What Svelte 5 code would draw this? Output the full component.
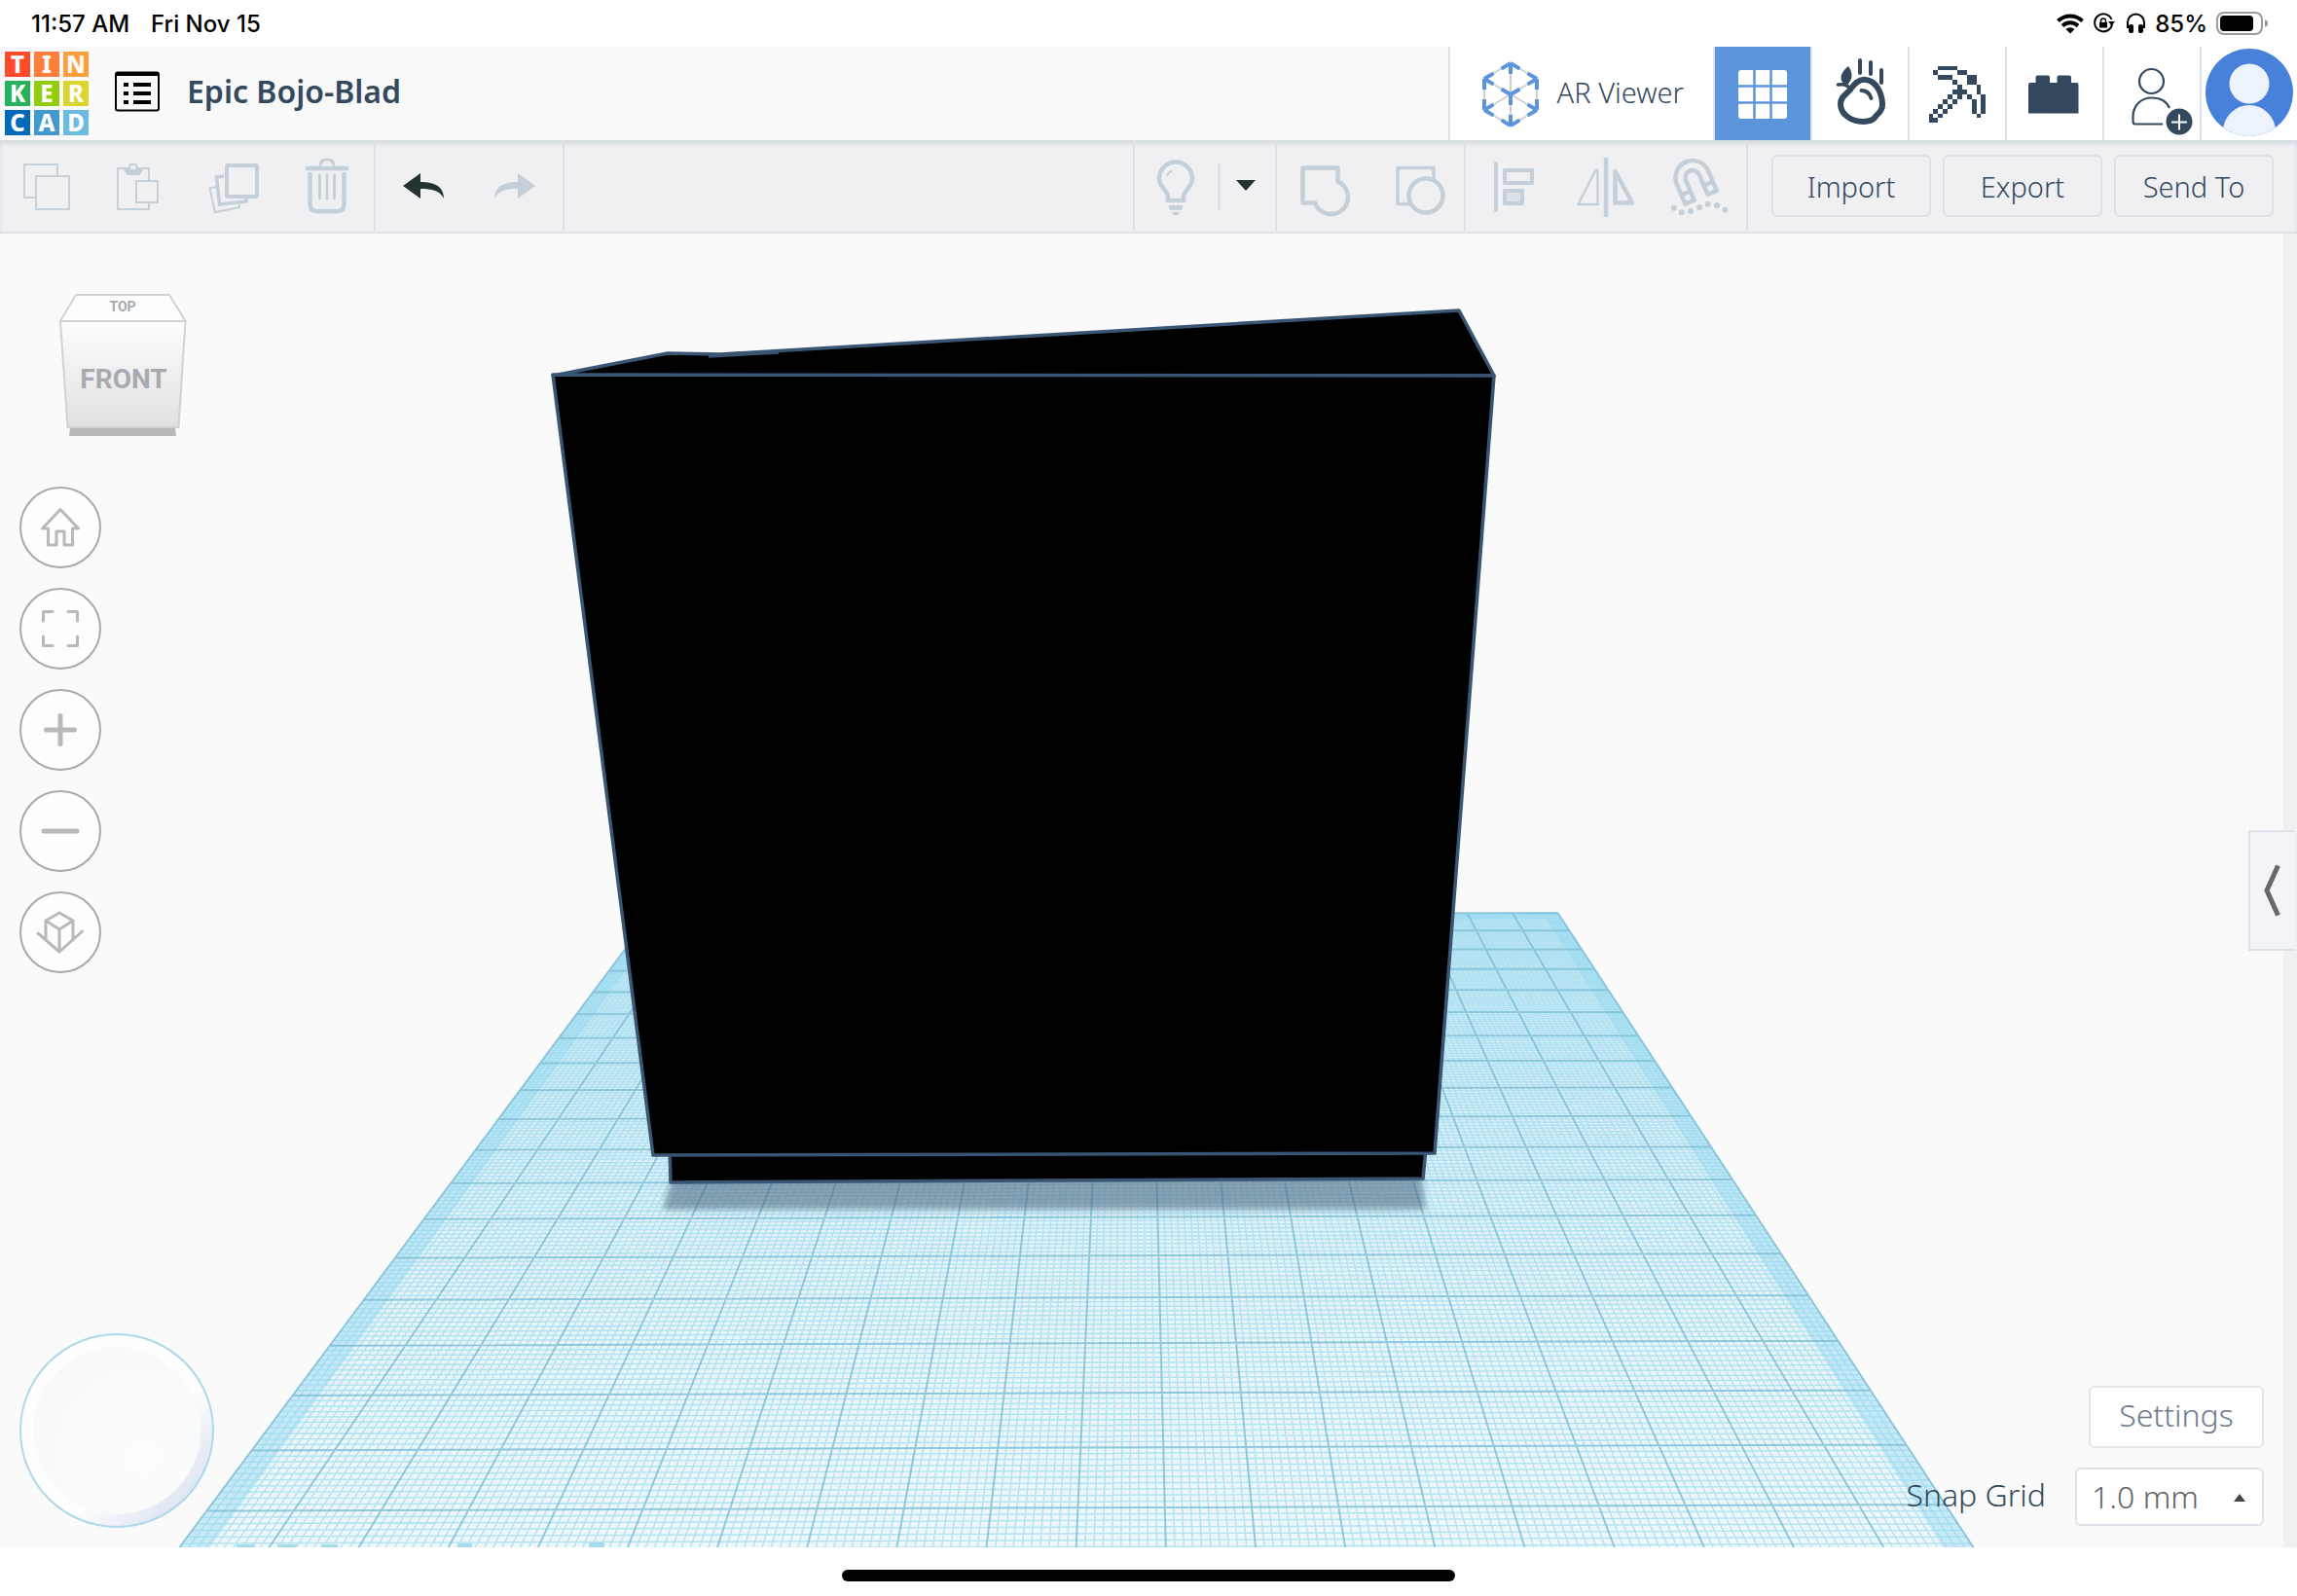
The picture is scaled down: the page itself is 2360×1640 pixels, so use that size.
<script>
  const logo = [
    ['T', 'red'], ['I', 'coral'], ['N', 'orange'],
    ['K', 'green'], ['E', 'lime'], ['R', 'yellow'],
    ['C', 'navy'], ['A', 'blue'], ['D', 'sky'],
  ];

  // Pixel rows of the pickaxe
  const pickaxe = [
    '..####......',
    '.#....##....',
    '..###...##..',
    '.....#..##..',
    '......#...#.',
    '.....###..#.',
    '....#.#.#..#',
    '...#.#...#.#',
    '..#.#....#.#',
    '.#.#.....#.#',
    '#.#.......#.',
    '##..........',
  ];
  const pixels = pickaxe.flatMap((row, y) =>
    [...row].flatMap((c, x) => (c === '#' ? [{ x, y }] : []))
  );

  // Workplane corners on the canvas: far left, far right, near right, near left
  const corners = [[668.5, 940], [1600.5, 938], [2093, 1690], [104, 1698]];

  function projection([p0, p1, p2, p3]) {
    const dx1 = p1[0] - p2[0], dx2 = p3[0] - p2[0];
    const dx3 = p0[0] - p1[0] + p2[0] - p3[0];
    const dy1 = p1[1] - p2[1], dy2 = p3[1] - p2[1];
    const dy3 = p0[1] - p1[1] + p2[1] - p3[1];
    const det = dx1 * dy2 - dx2 * dy1;
    const g = (dx3 * dy2 - dx2 * dy3) / det;
    const h = (dx1 * dy3 - dx3 * dy1) / det;
    const a = p1[0] - p0[0] + g * p1[0], b = p3[0] - p0[0] + h * p3[0];
    const d = p1[1] - p0[1] + g * p1[1], e = p3[1] - p0[1] + h * p3[1];
    return (u, v) => {
      const w = g * u + h * v + 1;
      return `${((a * u + b * v + p0[0]) / w).toFixed(2)} ${((d * u + e * v + p0[1]) / w).toFixed(2)}`;
    };
  }
  const at = projection(corners);
  const cells = 20;

  function lines(step, keep) {
    let d = '';
    for (let i = 0; i <= cells * 10; i += step) {
      if (!keep(i)) continue;
      const t = i / (cells * 10);
      d += `M${at(t, 0)}L${at(t, 1)}M${at(0, t)}L${at(1, t)}`;
    }
    return d;
  }
  const fine = lines(1, (i) => i % 10 !== 0);
  const bold = lines(10, () => true);
  const m = 0.017;
  const plane = `M${at(0, 0)}L${at(1, 0)}L${at(1, 1)}L${at(0, 1)}Z`;
  const rim = `${plane}M${at(m, m)}L${at(1 - m, m)}L${at(1 - m, 1 - m)}L${at(m, 1 - m)}Z`;

  const hex = [[0, -32], [27, -16], [27, 16], [0, 32], [-27, 16], [-27, -16]];
  const stubs = hex
    .map(([x, y], i) => {
      const ends = [hex[(i + 1) % 6], hex[(i + 5) % 6], [0, 0]];
      return ends
        .map(([ex, ey]) => {
          const len = Math.hypot(ex - x, ey - y);
          return `M${x} ${y}L${x + ((ex - x) * 11) / len} ${y + ((ey - y) * 11) / len}`;
        })
        .join('');
    })
    .join('');

  let snap = $state('1.0 mm');
</script>

<div class="screen">
  <div class="status">
    <span>11:57 AM</span>
    <span class="date">Fri Nov 15</span>
    <div class="indicators">
      <svg width="28" height="22" viewBox="2114 13 28 22" aria-label="Wi-Fi">
        <g fill="none" stroke="#000" stroke-width="4">
          <path d="M2115.5 21.500a18 18 0 0 1 25 0M2120 26.500a11.500 11.500 0 0 1 16 0" />
        </g>
        <path d="M2123.500 30a6.500 6.500 0 0 1 9 0l-4.500 4.500z" />
      </svg>
      <svg width="24" height="22" viewBox="2151 13 24 22" aria-label="Rotation lock">
        <path d="M2170.500 20a9 9 0 1 0 .5 5" fill="none" stroke="#000" stroke-width="2" />
        <path d="M2167 22h7l-3.500 4.500zM2158 23h8v5.500h-8z" />
        <path d="M2159.500 23v-1.500a2.500 2.500 0 0 1 5 0V23" fill="none" stroke="#000" stroke-width="1.500" />
      </svg>
      <svg width="22" height="22" viewBox="2182 13 22 22" aria-label="Headphones">
        <path d="M2185 29v-6a8.500 8.500 0 0 1 17 0v6" fill="none" stroke="#000" stroke-width="2" />
        <rect x="2186" y="25" width="5" height="9" rx="2" />
        <rect x="2196" y="25" width="5" height="9" rx="2" />
      </svg>
      <span>85%</span>
      <svg width="54" height="26" viewBox="2277 11 54 26" aria-label="Battery">
        <rect x="2278" y="13" width="46" height="22" rx="7" fill="none" stroke="#9a9a9a" stroke-width="2" />
        <rect x="2281" y="16" width="34" height="16" rx="4" />
        <path d="M2327 20q3 1 3 4t-3 4z" fill="#9a9a9a" />
      </svg>
    </div>
  </div>

  <header>
    <a class="logo" href="#home" aria-label="Tinkercad">
      {#each logo as [letter, tone]}
        <span class={tone}>{letter}</span>
      {/each}
    </a>
    <button class="list" aria-label="Designs">
      <svg width="46" height="42" viewBox="118 72 46 42">
        <rect x="119" y="73.500" width="44" height="39" rx="2" fill="none" stroke="#000" stroke-width="2" />
        <path d="M119 73h44v4h-44zM127 84h5v4h-5zM127 93h5v4h-5zM127 102h5v4h-5zM137 84h18v4h-18zM137 93h18v4h-18zM137 102h18v4h-18z" />
      </svg>
    </button>
    <h1>Epic Bojo-Blad</h1>
    <nav class="modes">
      <button class="ar">
        <svg width="60" height="70" viewBox="-30 -35 60 70">
          <path d="M0-32L27-16V16L0 32L-27 16V-16ZM0-32V32M-27-16L27 16M27-16L-27 16" fill="none" stroke="#cfcfcf" stroke-width="2" />
          <path d="{stubs}M0 0V11M0 0L-9.500-5.500M0 0L9.500-5.500" fill="none" stroke="#5c95dc" stroke-width="4" />
        </svg>
        <span>AR Viewer</span>
      </button>
      <button class="active" aria-label="3D design">
        <svg width="98" height="96" viewBox="1762 48 98 96">
          <rect x="1786" y="72" width="50" height="50" rx="3" fill="#fff" />
          <path d="M1802.500 72V122M1819.500 72V122M1786 88.500H1836M1786 105.500H1836" stroke="#5c95dc" stroke-width="2.500" />
        </svg>
      </button>
      <button aria-label="Sim lab">
        <svg width="98" height="96" viewBox="1862 48 98 96">
          <g fill="none" stroke="#34495e" stroke-width="6">
            <path d="M1901 92C1906 85 1911 81 1917 82C1927 83 1933 94 1934 106C1934.500 112 1932 115 1929 117.500C1926 120 1926 125 1914 125C1903 125 1891 118 1891 107C1891 99 1897 97 1901 92Z" />
            <path d="M1911 62V75M1922 64V76M1933 72V85" stroke-width="4" stroke-linecap="round" />
            <path d="M1912.500 93C1918 93 1921 96 1922.500 101" stroke-width="4" stroke-linecap="round" />
            <path d="M1888.500 87C1894 86 1899 87 1902 93" stroke-width="3.500" stroke-linecap="round" />
          </g>
          <path d="M1899 68C1904 75 1904 82 1897 88C1888 83 1891 74 1899 68Z" fill="#34495e" />
        </svg>
      </button>
      <button aria-label="Blocks">
        <svg width="98" height="96" viewBox="1962 48 98 96" fill="#34495e" shape-rendering="crispEdges">
          {#each pixels as p}
            <rect x={1981.5 + p.x * 4.9} y={67.500 + p.y * 4.9} width="4.9" height="4.9" />
          {/each}
        </svg>
      </button>
      <button aria-label="Bricks">
        <svg width="98" height="96" viewBox="2062 48 98 96">
          <path d="M2084 116.500V87q0-2 2-2h5.500v-5.500q0-2 2-2h10.500q2 0 2 2V85h7.500v-5.500q0-2 2-2h10.500q2 0 2 2V85h5.500q2 0 2 2v29.500z" fill="#34495e" />
        </svg>
      </button>
      <button aria-label="Invite people">
        <svg width="98" height="96" viewBox="2162 48 98 96">
          <g fill="none" stroke="#34495e" stroke-width="2.200">
            <circle cx="2210.500" cy="83.500" r="12.500" />
            <path d="M2222 127.500H2194q-2.500 0-2.500-2.500V120C2191.500 108 2200 100.500 2210.500 100.500C2219 100.500 2226 104 2229 111" />
          </g>
          <circle cx="2239" cy="125" r="13.500" fill="#34495e" />
          <path d="M2231 125.500h16M2239 117.500v16" stroke="#fff" stroke-width="2" />
        </svg>
      </button>
      <button aria-label="Account">
        <svg width="98" height="96" viewBox="2262 48 98 96">
          <clipPath id="face"><circle cx="2311" cy="95" r="45" /></clipPath>
          <circle cx="2311" cy="95" r="45" fill="#4881d9" />
          <g fill="#edf3fb" clip-path="url(#face)">
            <circle cx="2311" cy="86" r="20.500" />
            <circle cx="2311" cy="135" r="27" />
          </g>
        </svg>
      </button>
    </nav>
  </header>

  <div class="toolbar">
    <div class="group">
      <button aria-label="Copy">
        <svg class="icon" viewBox="0 144 96 94">
          <path d="M36 203H25V169H59V180" /><rect x="37" y="181" width="34" height="34" />
        </svg>
      </button>
      <button aria-label="Paste">
        <svg class="icon" viewBox="96 144 96 94">
          <path d="M153 185V173H121V215H153V209" /><rect x="140" y="186" width="22" height="22" />
          <path d="M127 173h20v2l-4 5h-12l-4-5z" fill="#c5cfd9" stroke="none" />
          <rect x="133" y="169" width="7.500" height="6" rx="2" fill="#f0f0f3" />
        </svg>
      </button>
      <button aria-label="Duplicate">
        <svg class="icon" viewBox="192 144 96 94">
          <rect x="233" y="170" width="31" height="32" stroke-width="4" rx="1" />
          <path d="M230 181L222.500 182L225.500 210L253 207V204" stroke-width="3.500" />
          <path d="M222 192L215.500 193.500L221 218L246 213V210" />
        </svg>
      </button>
      <button aria-label="Delete">
        <svg class="icon" viewBox="288 144 96 94">
          <path d="M316 173H356M318.500 179V210q0 7 7 7H346.500q7 0 7-7V179" stroke-width="4.500" stroke-linecap="round" />
          <path d="M329 171q0-7 7-7t7 7M328.500 180V204M336 180V204M343.500 180V204" stroke-width="2.800" stroke-linecap="round" />
        </svg>
      </button>
    </div>
    <div class="group">
      <button aria-label="Undo">
        <svg class="icon solid" viewBox="386 144 96 94">
          <path d="M414 191L432 178V187C447 187 456 192 456 204C452 196 444 194 432 194V204Z" fill="#253233" />
        </svg>
      </button>
      <button aria-label="Redo">
        <svg class="icon solid" viewBox="482 144 96 94">
          <path d="M550 191L532 178V187C517 187 508 192 508 204C512 196 520 194 532 194V204Z" fill="#c5cfd9" />
        </svg>
      </button>
    </div>
    <div class="group fill">
      <button aria-label="Show all">
        <svg class="icon" viewBox="1166 144 96 94">
          <path d="M1200 206V201C1198 194 1191 192 1191 183.500A17 17 0 0 1 1225 183.500C1225 192 1218 194 1216 201V206Z" stroke-width="4.500" />
          <path d="M1199 181q1-4 5-5" />
          <path d="M1201 211h14v2q0 3-3 3h-8q-3 0-3-3zM1203.500 218h9q-1 3-3 3h-3q-2 0-3-3z" fill="#c5cfd9" stroke="none" />
          <path d="M1252.500 169V215" stroke="#dde2e8" stroke-width="3" stroke-linecap="round" />
        </svg>
      </button>
      <button class="narrow" aria-label="Visibility options">
        <svg class="icon solid" viewBox="1262 144 48 94"><path d="M1270 185h20l-10 11z" fill="#253233" /></svg>
      </button>
    </div>
    <div class="group">
      <button aria-label="Group">
        <svg class="icon thick" viewBox="1312 144 96 94">
          <path d="M1338.500 172.500H1374.500V186.500A17.500 17.500 0 1 1 1351 208.500H1338.500Z" />
        </svg>
      </button>
      <button aria-label="Ungroup">
        <svg class="icon thick" viewBox="1408 144 96 94">
          <path d="M1473 184V172.500H1436V209.500H1449" stroke-width="3.500" />
          <circle cx="1465" cy="201" r="17.500" />
        </svg>
      </button>
    </div>
    <div class="group">
      <button aria-label="Align">
        <svg class="icon thick" viewBox="1506 144 96 94">
          <path d="M1537 168V216" stroke-width="4" />
          <rect x="1546" y="175" width="28" height="13" stroke-width="4" />
          <rect x="1546" y="196" width="18" height="13" stroke-width="4" fill="#dde2e8" />
        </svg>
      </button>
      <button aria-label="Mirror">
        <svg class="icon thick" viewBox="1602 144 96 94">
          <path d="M1650 164V221" />
          <path d="M1621.500 210L1639 175.500q2-2 2.500 0V210Z" stroke-width="2.500" />
          <path d="M1659.500 176L1677 208.500H1659.500Z" />
        </svg>
      </button>
      <button aria-label="Snap">
        <svg class="icon thick" viewBox="1698 144 96 94">
          <path transform="translate(1739 182.500) rotate(-23)" d="M-17.500 22V0A17.500 17.500 0 0 1 17.500 0V22H7.500V0A7.500 7.500 0 0 0-7.500 0V22ZM-17.500 12H-7.500M7.500 12H17.500" />
          <g fill="#c5cfd9" stroke="none">
            {#each [[1719.7, 213.7], [1727.7, 218.3], [1737, 217], [1746, 213], [1754.7, 209.7], [1764, 211], [1772.3, 215.7]] as [x, y]}
              <circle cx={x} cy={y} r="3" />
            {/each}
          </g>
        </svg>
      </button>
    </div>
    <div class="group actions">
      <button>Import</button>
      <button>Export</button>
      <button>Send To</button>
    </div>
  </div>

  <main>
    <svg class="canvas" viewBox="0 240 2360 1350" preserveAspectRatio="xMidYMin slice" aria-label="Workplane">
      <defs>
        <filter id="soft" x="-5%" y="-20%" width="110%" height="140%"><feGaussianBlur stdDeviation="3" /></filter>
        <linearGradient id="haze" gradientUnits="userSpaceOnUse" x1="0" y1="940" x2="0" y2="1590">
          <stop offset="0" stop-color="#cdebf6" /><stop offset="0.500" stop-color="#e4f3f8" /><stop offset="1" stop-color="#eef7f9" />
        </linearGradient>
      </defs>
      <path d={plane} fill="url(#haze)" />
      <path d={fine} fill="none" stroke="#a3dcef" stroke-width="1.500" opacity="0.750" />
      <path d={rim} fill="#8fd8f0" fill-rule="evenodd" opacity="0.400" />
      <path d={bold} fill="none" stroke="#7abdd5" stroke-width="2" opacity="0.800" />
      <path d="M243 1587h19v3h-19zM285 1587h20v3h-20zM330 1587h17v3h-17zM470 1586h15v4h-15zM605 1585h16v5h-16z" fill="#a8dbea" />
      <path d="M692 1205H1460L1465 1243H681Z" fill="#46627a" opacity="0.550" filter="url(#soft)" />
      <g stroke="#3a5573" stroke-width="3.500" stroke-linejoin="round">
        <path d="M688 1180L689 1215L1462 1211L1465 1180Z" />
        <path d="M568 386L686 363L740 364L1499 319L1535 386Z" />
        <path d="M568 385L1535 386L1474 1185L671 1187Z" />
        <path d="M728 366L800 362" />
      </g>
    </svg>

    <div class="left">
      <svg class="cube" width="140" height="160" viewBox="56 296 140 160" aria-label="View cube">
        <defs>
          <linearGradient id="shade" x1="0" y1="0" x2="0" y2="1">
            <stop offset="0" stop-color="#fdfdfd" /><stop offset="1" stop-color="#e0e0e0" />
          </linearGradient>
        </defs>
        <path d="M72 439H180L181 448H71Z" fill="#bababa" />
        <g stroke="#d2d2d2" stroke-width="2">
          <path d="M78 303H174L190.500 330H62Z" fill="#fdfdfd" />
          <path d="M62 330H190.500L183.500 439H69.500Z" fill="url(#shade)" />
        </g>
        <text class="top" x="126" y="320">TOP</text>
        <text class="front" x="127" y="399">FRONT</text>
      </svg>
      <div class="views">
        <button aria-label="Home view"><svg viewBox="-42 -42 84 84"><path d="M0-18.500L18.500 1H12.500V18H4V4H-4V18H-12.500V1H-18.500Z" /></svg></button>
        <button aria-label="Fit view"><svg viewBox="-42 -42 84 84"><path d="M-17.500-8V-17.500H-8M8-17.500H17.500V-8M17.500 8V17.500H8M-8 17.500H-17.500V8" /></svg></button>
        <button aria-label="Zoom in"><svg viewBox="-42 -42 84 84"><path class="wide" d="M-14.500 0H14.500M0-14.500V14.500" /></svg></button>
        <button aria-label="Zoom out"><svg viewBox="-42 -42 84 84"><path class="wide" d="M-17 0H17" /></svg></button>
        <button aria-label="Switch projection"><svg viewBox="-42 -42 84 84"><path d="M-15 8V-12L-1-20L13-12V8M-15-12L-1-3L13-12M-1-3V20M-23 1L-1 20L22.500-1" /></svg></button>
      </div>
      <div class="joystick"><div></div></div>
    </div>

    <div class="right-side">
      <div class="settings">
        <button>Settings</button>
        <div class="snap">
          <label for="snap">Snap Grid</label>
          <div class="select">
            <select id="snap" bind:value={snap}>
              <option>0.5 mm</option>
              <option>1.0 mm</option>
              <option>2.0 mm</option>
            </select>
            <svg width="12" height="8" viewBox="0 0 12 8"><path d="M0 8L6 0L12 8Z" fill="#444" /></svg>
          </div>
        </div>
      </div>
    </div>
    <div class="rail">
      <button aria-label="Open shapes panel">
        <svg width="20" height="56" viewBox="0 0 20 56"><path d="M15.500 2.500L4 28L15.500 53.500" fill="none" stroke="#666968" stroke-width="5" /></svg>
      </button>
    </div>
  </main>

  <footer><div></div></footer>
</div>

<style>
  :global(body) { background: #fff; }
  * { box-sizing: border-box; }
  .screen {
    min-height: 100vh;
    display: flex;
    flex-direction: column;
    font-family: "Noto Sans", "Open Sans", sans-serif;
    color: #34495e;
  }
  button {
    font: inherit;
    color: inherit;
    background: none;
    border: 0;
    padding: 0;
    margin: 0;
  }
  svg { display: block; flex: none; }

  .status {
    height: 48px;
    padding: 0 29px 0 32px;
    display: flex;
    align-items: center;
    gap: 22px;
    font: 500 24px "Inter", sans-serif;
    color: #000;
  }
  .indicators { display: flex; align-items: center; gap: 9px; margin-left: auto; }

  header {
    height: 96px;
    display: flex;
    align-items: center;
    background: #f9f9f9;
  }
  .logo {
    display: grid;
    grid-template-columns: repeat(3, 26px);
    grid-auto-rows: 26px;
    gap: 4px;
    margin-left: 5px;
    text-decoration: none;
  }
  .logo span {
    display: flex;
    align-items: center;
    justify-content: center;
    font-size: 24px;
    line-height: 26px;
    font-weight: 800;
    color: #fff;
  }
  .red { background: #ff4b29; }
  .coral { background: #ff7e3c; }
  .orange { background: #ff9f3c; }
  .green { background: #24b35b; }
  .lime { background: #92cc0a; }
  .yellow { background: #dbd530; }
  .navy { background: #0069ba; }
  .blue { background: #4399cf; }
  .sky { background: #6cbbe0; }
  .list { margin: 0 28px 0 27px; padding-bottom: 4px; }
  h1 { margin: 0; padding-bottom: 4px; font-size: 32px; line-height: 44px; font-weight: 600; }
  .modes { display: flex; margin-left: auto; align-self: stretch; background: #fff; }
  .modes button { border-left: 2px solid #dde2e8; }
  .ar {
    display: flex;
    align-items: center;
    gap: 18px;
    padding: 2px 30px 0 32px;
    font-size: 29px;
    line-height: 40px;
    font-weight: 300;
  }
  .ar span { padding-bottom: 4px; }
  .modes .active { background: #5c95dc; }

  .toolbar {
    height: 96px;
    display: flex;
    background: #f0f0f3;
    border-bottom: 2px solid #dde2e8;
    box-shadow: inset 0 4px 4px #d5dbe3;
  }
  .group { display: flex; }
  .group + .group { border-left: 2px solid #dde2e8; }
  .fill { flex: 1; justify-content: flex-end; }
  .fill button:first-child { box-shadow: -2px 0 #dde2e8; }
  .icon {
    width: 96px;
    height: 94px;
    fill: none;
    stroke: #c5cfd9;
    stroke-width: 2;
  }
  .narrow .icon { width: 48px; }
  .thick { stroke-width: 4.500; stroke-linejoin: round; stroke-linecap: round; }
  .solid { stroke: none; }
  .actions { gap: 12px; align-items: center; padding: 0 24px; }
  .actions button {
    width: 164px;
    height: 64px;
    border: 2px solid #dde2e8;
    border-radius: 6px;
    font-size: 29px;
    font-weight: 300;
  }

  main {
    flex: 1;
    position: relative;
    display: flex;
    background: #fafafa;
    overflow: hidden;
  }
  .canvas { position: absolute; inset: 0; width: 100%; height: 100%; }
  .left, .right-side, .rail { position: relative; }
  .left { display: flex; flex-direction: column; padding: 56px 20px 20px; }
  .cube { margin: 0 36px 44px; }
  .cube text { font-family: Roboto, sans-serif; font-weight: 700; fill: #a7abb1; text-anchor: middle; }
  .top { font-size: 14px; }
  .front { font-size: 28px; }
  .views { display: flex; flex-direction: column; gap: 20px; margin-bottom: 40px; }
  .views button {
    width: 84px;
    height: 84px;
    border: 2px solid #a5aab0;
    border-radius: 50%;
    background: #fdfdfd;
    display: flex;
    align-items: center;
    justify-content: center;
  }
  .views svg {
    width: 84px;
    height: 84px;
    fill: none;
    stroke: #b9b9b9;
    stroke-width: 3;
    stroke-linejoin: round;
    stroke-linecap: round;
  }
  .wide { stroke-width: 5; }
  .joystick {
    margin-top: auto;
    width: 200px;
    height: 200px;
    padding: 12px;
    border: 2px solid #aed8ec;
    border-radius: 50%;
    background: linear-gradient(135deg, #fefefe 60%, #dce4f0 88%);
  }
  .joystick div {
    height: 100%;
    border-radius: 50%;
    background: radial-gradient(circle at 66% 66%, #fcfdfd, #f6f8fa);
  }

  .right-side {
    margin-left: auto;
    display: flex;
    align-items: flex-end;
    padding: 0 20px 22px;
    font-size: 32px;
    line-height: 44px;
    font-weight: 300;
  }
  .settings { display: flex; flex-direction: column; align-items: flex-end; gap: 20px; }
  .settings button {
    width: 180px;
    height: 64px;
    padding-bottom: 4px;
    border: 2px solid #e2e6eb;
    border-radius: 6px;
    background: #fff;
    color: #6d7c8e;
  }
  .snap { display: flex; align-items: center; gap: 30px; }
  .snap label { padding-bottom: 4px; }
  .select { position: relative; }
  .select svg { position: absolute; right: 19px; top: 27px; pointer-events: none; }
  select {
    appearance: none;
    width: 194px;
    height: 60px;
    padding: 0 15px;
    border: 2px solid #dde2e8;
    border-radius: 6px;
    background: #fff;
    font: inherit;
    color: #5f6464;
  }
  .rail {
    width: 14px;
    display: flex;
    align-items: center;
    justify-content: flex-end;
    background: #f0f0f3;
  }
  .rail button {
    flex: none;
    width: 48px;
    height: 124px;
    margin-right: 2px;
    padding-left: 13px;
    border: 2px solid #dde2e8;
    border-right: 0;
    background: #f3f4f7;
  }

  footer { height: 50px; display: flex; align-items: center; justify-content: center; padding-top: 8px; }
  footer div { width: 630px; height: 12px; border-radius: 6px; background: #000; }
</style>
